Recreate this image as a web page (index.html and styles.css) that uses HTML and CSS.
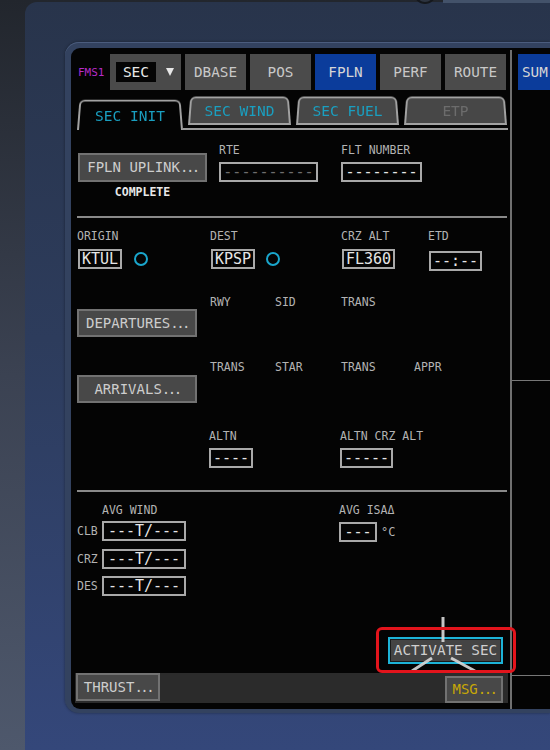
FILE: index.html
```html
<!DOCTYPE html>
<html lang="en">
<head>
    <meta charset="UTF-8">
    <meta name="viewport" content="width=device-width, initial-scale=1.0">
    <title>FMS - SEC INIT</title>
    <link rel="stylesheet" href="styles.css">
</head>
<body>
    <div class="device">
        <div class="bezel">
            <div class="frame">
                <div class="screen">
                    <div class="main">
                        <div class="nav">
                            <span class="fms">FMS1</span>
                            <div class="sec-select">
                                <span class="sec-value">SEC</span>
                                <span class="caret"></span>
                            </div>
                            <div class="nav-btn">DBASE</div>
                            <div class="nav-btn">POS</div>
                            <div class="nav-btn nav-active">FPLN</div>
                            <div class="nav-btn">PERF</div>
                            <div class="nav-btn">ROUTE</div>
                        </div>

                        <div class="tabs">
                            <div class="tab tab-active"><span>SEC INIT</span></div>
                            <div class="tab-rest">
                                <div class="tab"><span>SEC WIND</span></div>
                                <div class="tab"><span>SEC FUEL</span></div>
                                <div class="tab tab-off"><span>ETP</span></div>
                            </div>
                        </div>

                        <div class="section sec-route">
                            <div class="c-uplink">
                                <div class="btn btn-uplink">FPLN UPLINK<span class="dots">...</span></div>
                                <div class="status">COMPLETE</div>
                            </div>
                            <div class="c-rte">
                                <div class="label">RTE</div>
                                <div class="field field-dim w-rte">----------</div>
                            </div>
                            <div>
                                <div class="label">FLT NUMBER</div>
                                <div class="field w-flt">--------</div>
                            </div>
                        </div>
                        <div class="divider"></div>

                        <div class="section sec-plan">
                            <div class="row row-a">
                                <div class="c-133">
                                    <div class="label">ORIGIN</div>
                                    <div class="value-line">
                                        <div class="field">KTUL</div>
                                        <span class="dot"></span>
                                    </div>
                                </div>
                                <div class="c-131">
                                    <div class="label">DEST</div>
                                    <div class="value-line">
                                        <div class="field">KPSP</div>
                                        <span class="dot"></span>
                                    </div>
                                </div>
                                <div class="c-87">
                                    <div class="label">CRZ ALT</div>
                                    <div class="field">FL360</div>
                                </div>
                                <div>
                                    <div class="label">ETD</div>
                                    <div class="field etd">--:--</div>
                                </div>
                            </div>

                            <div class="row row-b">
                                <div class="c-133">
                                    <div class="btn btn-proc btn-dep">DEPARTURES<span class="dots">...</span></div>
                                </div>
                                <div class="label c-65">RWY</div>
                                <div class="label c-66">SID</div>
                                <div class="label">TRANS</div>
                            </div>

                            <div class="row row-c">
                                <div class="c-133">
                                    <div class="btn btn-proc btn-arr">ARRIVALS<span class="dots">...</span></div>
                                </div>
                                <div class="label c-65">TRANS</div>
                                <div class="label c-66">STAR</div>
                                <div class="label c-73">TRANS</div>
                                <div class="label">APPR</div>
                            </div>

                            <div class="row row-d">
                                <div class="c-132"></div>
                                <div class="c-131">
                                    <div class="label">ALTN</div>
                                    <div class="field">----</div>
                                </div>
                                <div>
                                    <div class="label">ALTN CRZ ALT</div>
                                    <div class="field">-----</div>
                                </div>
                            </div>
                        </div>
                        <div class="divider"></div>

                        <div class="section sec-wind">
                            <div class="wind-col">
                                <div class="label wind-title">AVG WIND</div>
                                <div class="wind-row">
                                    <span class="label wind-label">CLB</span>
                                    <div class="field wind-field">---T/---</div>
                                </div>
                                <div class="wind-row">
                                    <span class="label wind-label">CRZ</span>
                                    <div class="field wind-field">---T/---</div>
                                </div>
                                <div class="wind-row">
                                    <span class="label wind-label">DES</span>
                                    <div class="field wind-field">---T/---</div>
                                </div>
                            </div>
                            <div>
                                <div class="label">AVG ISA&Delta;</div>
                                <div class="value-line isa-line">
                                    <div class="field isa-field">---</div>
                                    <span class="label unit">&deg;C</span>
                                </div>
                            </div>
                        </div>

                        <div class="bottom">
                            <div class="act-row">
                                <div class="btn btn-activate">ACTIVATE SEC</div>
                            </div>
                            <div class="bottom-bar">
                                <div class="btn btn-thrust">THRUST<span class="dots">...</span></div>
                                <div class="btn btn-msg">MSG<span class="dots">...</span></div>
                            </div>
                        </div>
                    </div>

                    <div class="vline"></div>

                    <div class="side">
                        <div class="nav-btn nav-active side-btn">SUM</div>
                        <div class="side-line first"></div>
                        <div class="side-line second"></div>
                    </div>

                    <!-- pointer lines and highlight drawn over the ACTIVATE SEC button -->
                    <svg class="pointer" width="90" height="66" viewBox="0 0 90 66">
                        <line x1="43" y1="7" x2="43" y2="32" />
                        <line x1="32" y1="48" x2="12" y2="61" />
                        <line x1="51" y1="48" x2="75" y2="61" />
                    </svg>
                    <div class="highlight"></div>
                </div>
            </div>
        </div>
    </div>
</body>
</html>
```

FILE: styles.css
```css
body {
    margin: 0;
    font-family: "DejaVu Sans Mono", "Liberation Mono", monospace;
    background: #2a2f38;
}
.device {
    position: relative;
    width: 550px;
    height: 750px;
    overflow: hidden;
    display: flex;
    flex-direction: column;
    background: linear-gradient(180deg, #22262d 0%, #3b4252 50%, #4e586c 100%);
}
.device::before {
    content: "";
    position: absolute;
    top: 0;
    left: 443px;
    right: 0;
    height: 3px;
    background: #43526a;
}
.device::after {
    content: "";
    position: absolute;
    top: -18px;
    left: 414px;
    width: 18px;
    height: 18px;
    border-radius: 50%;
    border: 2px solid #15181d;
    background: #2d3440;
}
.bezel {
    flex: 1;
    margin: 2px 0 0 25px;
    padding: 40px 0 0 40px;
    border-radius: 12px 0 0 0;
    background: linear-gradient(180deg, #28344b 0%, #2d3c5c 45%, #34477a 100%);
}
.frame {
    padding: 6px 0 4px 6px;
    border-radius: 14px 0 0 14px;
    background: #33425f;
    box-shadow: inset 0 1px 0 #4b5c7d, 0 0 3px rgba(0, 0, 0, 0.4);
}
.screen {
    position: relative;
    height: 661px;
    display: flex;
    background: #040404;
    border-radius: 9px 0 0 9px;
}

/* ---------- main column ---------- */
.main {
    width: 439px;
    padding: 6px 0 0 6px;
    box-sizing: border-box;
    display: flex;
    flex-direction: column;
}
.nav {
    display: flex;
    align-items: center;
    height: 36px;
    padding-left: 1px;
}
.fms {
    width: 32px;
    color: #b72bc8;
    font-size: 11px;
}
.sec-select {
    width: 71px;
    height: 36px;
    margin-right: 4px;
    display: flex;
    align-items: center;
    background: #4a4a4a;
}
.sec-value {
    width: 40px;
    height: 20px;
    margin-left: 6px;
    line-height: 20px;
    text-align: center;
    background: #050505;
    color: #e8e8e8;
    font-size: 14.5px;
}
.caret {
    margin-left: 10px;
    width: 0;
    height: 0;
    border-left: 4px solid transparent;
    border-right: 4px solid transparent;
    border-top: 8px solid #e6e6e6;
}
.nav-btn {
    width: 61px;
    height: 36px;
    margin-right: 4px;
    line-height: 36px;
    text-align: center;
    background: #4b4b4b;
    color: #c8c8c8;
    font-size: 14.3px;
}
.nav-active {
    background: #0b3c9b;
    color: #d6d6d6;
}

/* ---------- tabs ---------- */
.tabs {
    display: flex;
    align-items: flex-end;
    height: 34px;
    margin-top: 6px;
    margin-right: 2px;
}
.tab {
    position: relative;
    width: 103px;
    height: 30px;
    display: flex;
    align-items: center;
    justify-content: center;
    color: #1a9fc0;
    font-size: 14.5px;
}
.tab::before {
    content: "";
    position: absolute;
    inset: 0;
    border: 2px solid #a2a2a2;
    border-radius: 6px 6px 0 0;
    background: #474747;
    transform: perspective(80px) rotateX(7deg);
    transform-origin: bottom;
}
.tab span {
    position: relative;
    margin-top: 2px;
}
.tab-active {
    width: 106px;
    height: 32px;
}
.tab-active::before {
    border-bottom: none;
    background: #040404;
}
.tab-active span {
    margin-top: 4px;
}
.tab-off {
    color: #6c6c6c;
}
.tab-rest {
    flex: 1;
    display: flex;
    gap: 5px;
    padding: 0 0 3px 5px;
    border-bottom: 2px solid #9c9c9c;
}

/* ---------- shared pieces ---------- */
.label {
    color: #b3b3b3;
    font-size: 11.5px;
    line-height: 14px;
}
.field {
    display: inline-block;
    height: 20px;
    padding: 0 2px;
    box-sizing: border-box;
    border: 2px solid #a9a9a9;
    color: #e6e6e6;
    font-size: 15px;
    line-height: 16px;
    text-align: center;
    white-space: nowrap;
}
.field-dim {
    color: #6e6e6e;
}
.btn {
    box-sizing: border-box;
    border: 2px solid #727272;
    background: #484848;
    color: #cdcdcd;
    font-size: 14px;
    text-align: center;
    white-space: nowrap;
}
.dots {
    letter-spacing: -2.5px;
}
.divider {
    height: 2px;
    margin-right: 3px;
    background: #8a8a8a;
}
.section {
    box-sizing: border-box;
}
.row {
    display: flex;
}
.value-line {
    display: flex;
    align-items: center;
}
.dot {
    width: 14px;
    height: 14px;
    box-sizing: border-box;
    border: 2px solid #1aa6cc;
    border-radius: 50%;
}
.c-65 { width: 65px; }
.c-66 { width: 66px; }
.c-73 { width: 73px; }
.c-87 { width: 87px; }
.c-131 { width: 131px; }
.c-132 { width: 132px; }
.c-133 { width: 133px; }

/* ---------- route section ---------- */
.sec-route {
    display: flex;
    height: 86px;
    padding-top: 13px;
}
.sec-route .label {
    margin-bottom: 5px;
}
.c-uplink {
    width: 142px;
}
.btn-uplink {
    width: 129px;
    height: 29px;
    margin: 10px 0 0 1px;
    line-height: 25px;
}
.status {
    width: 129px;
    margin: 4px 0 0 1px;
    color: #e8e8e8;
    font-size: 11.5px;
    font-weight: bold;
    line-height: 12px;
    text-align: center;
}
.c-rte {
    width: 122px;
}
.w-rte {
    width: 99px;
}
.w-flt {
    width: 81px;
}

/* ---------- flight plan section ---------- */
.sec-plan {
    height: 272px;
    padding-top: 11px;
}
.row-a .label {
    margin-bottom: 6px;
}
.row-a .field {
    margin-left: 1px;
}
.row-a .c-133 .dot {
    margin-left: 12px;
}
.row-a .c-131 .dot {
    margin-left: 11px;
}
.etd {
    margin-top: 2px;
}
.row-b {
    margin-top: 24px;
}
.btn-proc {
    width: 120px;
    height: 28px;
    line-height: 24px;
}
.btn-dep {
    margin-top: 14px;
}
.row-c {
    margin-top: 23px;
}
.btn-arr {
    margin-top: 15px;
}
.row-d {
    margin-top: 26px;
}
.row-d .label {
    margin-bottom: 5px;
}
.row-d .field {
    min-width: 44px;
}

/* ---------- wind section ---------- */
.sec-wind {
    display: flex;
    padding-top: 11px;
}
.wind-col {
    width: 262px;
}
.wind-title {
    margin: 0 0 4px 25px;
}
.wind-row {
    display: flex;
    align-items: center;
    margin-bottom: 8px;
}
.wind-row:last-child {
    margin-top: -1px;
}
.wind-label {
    width: 25px;
}
.wind-field {
    width: 84px;
}
.isa-line {
    margin-top: 5px;
}
.isa-field {
    width: 38px;
}
.unit {
    margin-left: 4px;
    font-size: 12px;
}

/* ---------- bottom ---------- */
.bottom {
    margin-top: auto;
}
.act-row {
    display: flex;
    justify-content: flex-end;
    padding-right: 7px;
    margin-bottom: 9px;
}
.btn-activate {
    width: 115px;
    height: 27px;
    line-height: 23px;
    border: 2px solid #1db3d7;
    background: #444444;
    color: #cfcfcf;
    font-size: 14.3px;
    box-shadow: inset 0 0 0 1px #1a1a1a;
}
.bottom-bar {
    display: flex;
    justify-content: space-between;
    height: 30px;
    margin: 0 2px 6px -2px;
    padding-right: 5px;
    background: #2b2b2b;
}
.btn-thrust {
    width: 84px;
    height: 28px;
    margin-left: 1px;
    line-height: 24px;
}
.btn-msg {
    width: 58px;
    height: 27px;
    margin-top: 3px;
    line-height: 23px;
    color: #c7a706;
}

/* ---------- side column ---------- */
.vline {
    width: 2px;
    margin-top: 2px;
    background: #707070;
}
.side {
    flex: 1;
    overflow: hidden;
    padding-top: 6px;
}
.side-btn {
    width: 70px;
    margin-left: 6px;
    text-align: left;
    padding-left: 4px;
    box-sizing: border-box;
}
.side-line {
    height: 1px;
    background: #777777;
}
.side-line.first {
    margin-top: 290px;
}
.side-line.second {
    margin-top: 294px;
}

/* ---------- overlays ---------- */
.pointer {
    position: absolute;
    left: 329px;
    top: 562px;
}
.pointer line {
    stroke: #d9d9d9;
    stroke-width: 3;
    opacity: 0.9;
}
.highlight {
    position: absolute;
    left: 305px;
    top: 579px;
    width: 140px;
    height: 46px;
    box-sizing: border-box;
    border: 3px solid #e3141c;
    border-radius: 6px;
}
```
